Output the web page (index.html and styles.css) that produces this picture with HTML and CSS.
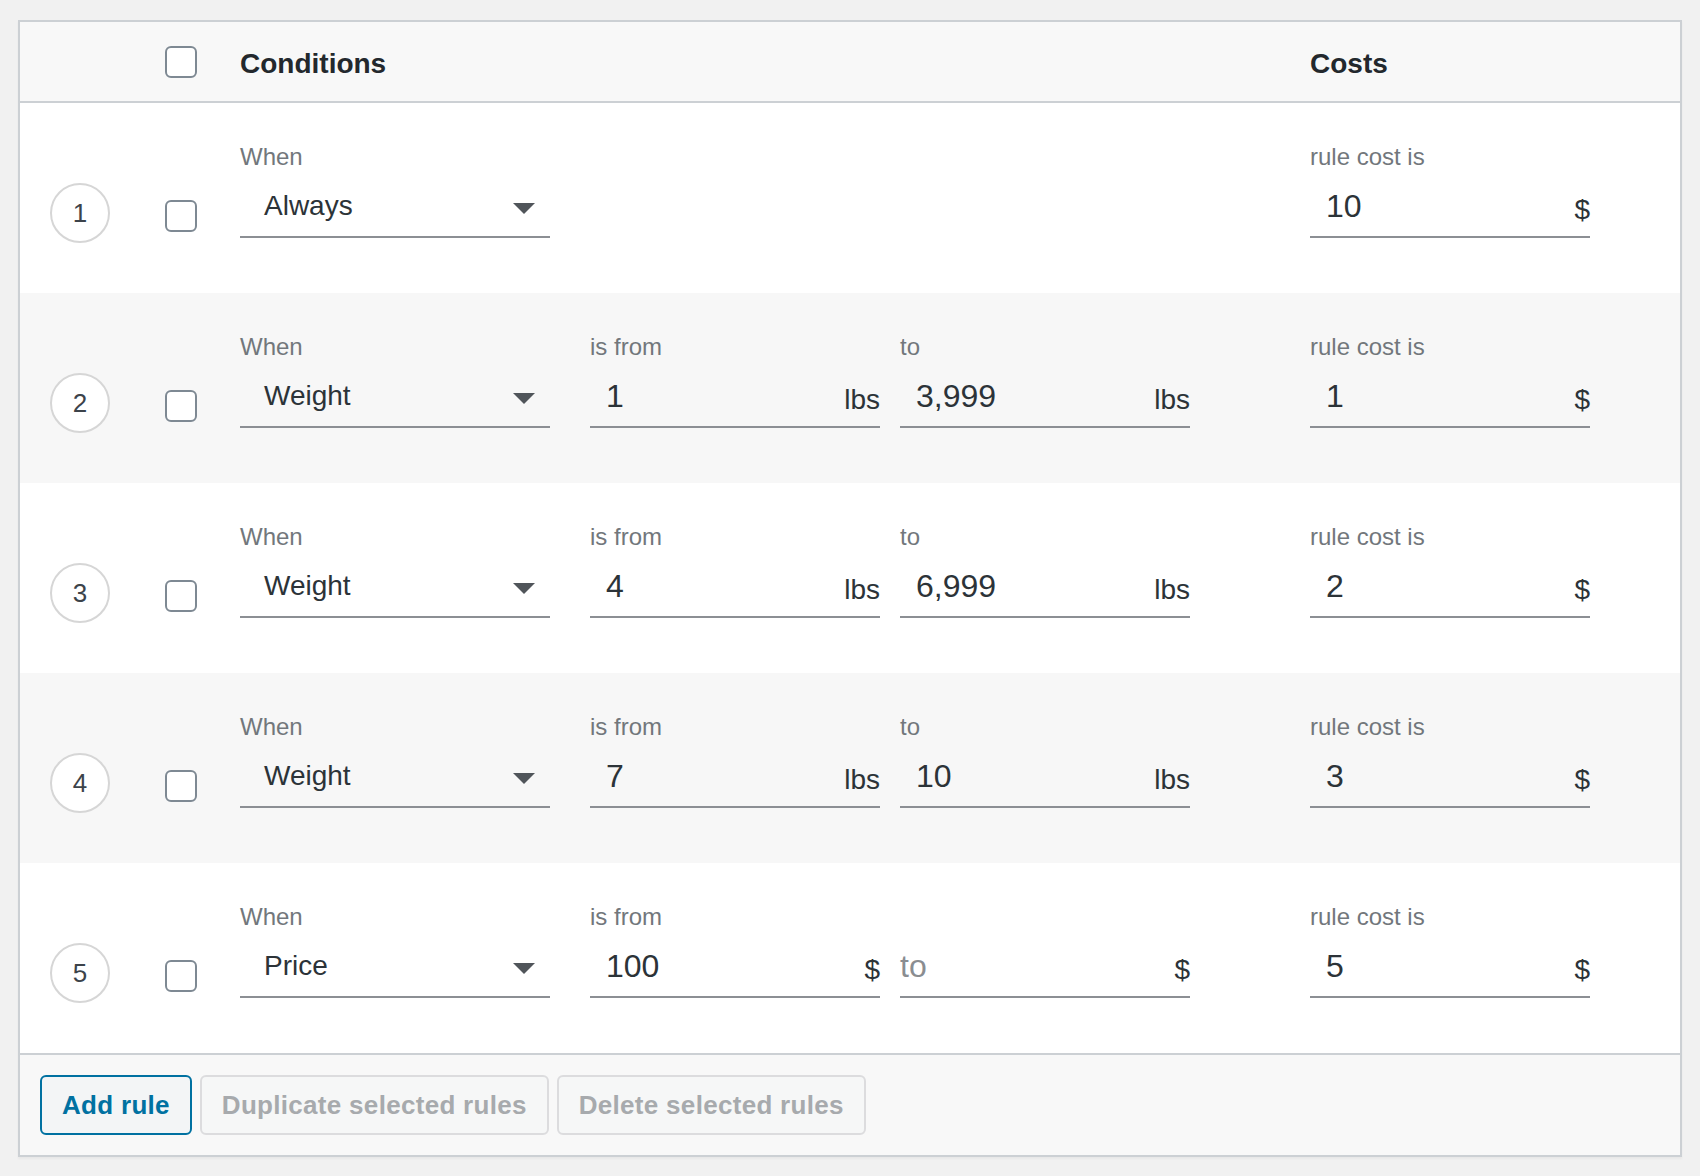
FILE: index.html
```html
<!DOCTYPE html>
<html lang="en">
<head>
<meta charset="utf-8">
<title>Shipping rules</title>
<link rel="stylesheet" href="styles.css">
</head>
<body>
<div class="rules">
  <div class="head">
    <div class="sel-col"><span class="cb"></span></div>
    <div class="h">Conditions</div>
    <div class="h">Costs</div>
  </div>

  <div class="row">
    <div class="sel-col"><span class="num">1</span><span class="cb"></span></div>
    <div class="conds">
      <div class="field f-sel">
        <div class="lbl">When</div>
        <div class="ctl sel"><span class="val">Always</span><svg class="arr" width="22" height="11" viewBox="0 0 22 11"><polygon points="0,0 22,0 11,11" /></svg></div>
      </div>
    </div>
    <div class="costs">
      <div class="field f-cost">
        <div class="lbl">rule cost is</div>
        <div class="ctl"><span class="val n">10</span><span class="suf">$</span></div>
      </div>
    </div>
  </div>

  <div class="row alt">
    <div class="sel-col"><span class="num">2</span><span class="cb"></span></div>
    <div class="conds">
      <div class="field f-sel">
        <div class="lbl">When</div>
        <div class="ctl sel"><span class="val">Weight</span><svg class="arr" width="22" height="11" viewBox="0 0 22 11"><polygon points="0,0 22,0 11,11" /></svg></div>
      </div>
      <div class="field f-num f-from">
        <div class="lbl">is from</div>
        <div class="ctl"><span class="val n">1</span><span class="suf">lbs</span></div>
      </div>
      <div class="field f-num">
        <div class="lbl">to</div>
        <div class="ctl"><span class="val n">3,999</span><span class="suf">lbs</span></div>
      </div>
    </div>
    <div class="costs">
      <div class="field f-cost">
        <div class="lbl">rule cost is</div>
        <div class="ctl"><span class="val n">1</span><span class="suf">$</span></div>
      </div>
    </div>
  </div>

  <div class="row">
    <div class="sel-col"><span class="num">3</span><span class="cb"></span></div>
    <div class="conds">
      <div class="field f-sel">
        <div class="lbl">When</div>
        <div class="ctl sel"><span class="val">Weight</span><svg class="arr" width="22" height="11" viewBox="0 0 22 11"><polygon points="0,0 22,0 11,11" /></svg></div>
      </div>
      <div class="field f-num f-from">
        <div class="lbl">is from</div>
        <div class="ctl"><span class="val n">4</span><span class="suf">lbs</span></div>
      </div>
      <div class="field f-num">
        <div class="lbl">to</div>
        <div class="ctl"><span class="val n">6,999</span><span class="suf">lbs</span></div>
      </div>
    </div>
    <div class="costs">
      <div class="field f-cost">
        <div class="lbl">rule cost is</div>
        <div class="ctl"><span class="val n">2</span><span class="suf">$</span></div>
      </div>
    </div>
  </div>

  <div class="row alt">
    <div class="sel-col"><span class="num">4</span><span class="cb"></span></div>
    <div class="conds">
      <div class="field f-sel">
        <div class="lbl">When</div>
        <div class="ctl sel"><span class="val">Weight</span><svg class="arr" width="22" height="11" viewBox="0 0 22 11"><polygon points="0,0 22,0 11,11" /></svg></div>
      </div>
      <div class="field f-num f-from">
        <div class="lbl">is from</div>
        <div class="ctl"><span class="val n">7</span><span class="suf">lbs</span></div>
      </div>
      <div class="field f-num">
        <div class="lbl">to</div>
        <div class="ctl"><span class="val n">10</span><span class="suf">lbs</span></div>
      </div>
    </div>
    <div class="costs">
      <div class="field f-cost">
        <div class="lbl">rule cost is</div>
        <div class="ctl"><span class="val n">3</span><span class="suf">$</span></div>
      </div>
    </div>
  </div>

  <div class="row">
    <div class="sel-col"><span class="num">5</span><span class="cb"></span></div>
    <div class="conds">
      <div class="field f-sel">
        <div class="lbl">When</div>
        <div class="ctl sel"><span class="val">Price</span><svg class="arr" width="22" height="11" viewBox="0 0 22 11"><polygon points="0,0 22,0 11,11" /></svg></div>
      </div>
      <div class="field f-num f-from">
        <div class="lbl">is from</div>
        <div class="ctl"><span class="val n">100</span><span class="suf">$</span></div>
      </div>
      <div class="field f-num">
        <div class="lbl"></div>
        <div class="ctl"><span class="ph">to</span><span class="suf">$</span></div>
      </div>
    </div>
    <div class="costs">
      <div class="field f-cost">
        <div class="lbl">rule cost is</div>
        <div class="ctl"><span class="val n">5</span><span class="suf">$</span></div>
      </div>
    </div>
  </div>

  <div class="foot">
    <span class="btn primary">Add rule</span>
    <span class="btn disabled">Duplicate selected rules</span>
    <span class="btn disabled">Delete selected rules</span>
  </div>
</div>
</body>
</html>
```

FILE: styles.css
```css
html, body {
  margin: 0;
  background: #f1f1f1;
}
body {
  padding: 20px 0 0 18px;
  height: 1176px;
  box-sizing: border-box;
  font-family: "Liberation Sans", Arial, Helvetica, sans-serif;
  color: #32373c;
}

.rules {
  width: 1664px;
  box-sizing: border-box;
  border: 2px solid #ccd0d4;
  background: #fff;
  box-shadow: 0 2px 2px rgba(0, 0, 0, 0.04);
}

.head {
  display: grid;
  grid-template-columns: 220px 1070px 1fr;
  align-items: center;
  height: 79px;
  background: #f8f8f8;
  border-bottom: 2px solid #ccd0d4;
}
.head .sel-col {
  display: flex;
  padding-left: 145px;
}
.h {
  font-size: 28px;
  font-weight: 700;
  color: #23282d;
  line-height: 32px;
  padding-top: 4px;
}

.cb {
  display: block;
  width: 32px;
  height: 32px;
  box-sizing: border-box;
  border: 2px solid #7e8993;
  border-radius: 6px;
  background: #fff;
  flex: none;
}

.row {
  display: grid;
  grid-template-columns: 220px 1070px 1fr;
  align-items: start;
  height: 190px;
  background: #fff;
}
.row.alt {
  background: #f7f7f7;
}

.row .sel-col {
  display: flex;
  align-items: flex-start;
  padding-left: 30px;
}
.num {
  width: 60px;
  height: 60px;
  box-sizing: border-box;
  margin-top: 80px;
  border: 2px solid #d6d6d6;
  border-radius: 50%;
  display: flex;
  align-items: center;
  justify-content: center;
  font-size: 26px;
  color: #3c434a;
  background: #fff;
  flex: none;
}
.row .cb {
  margin-top: 97px;
  margin-left: 55px;
}

.conds, .costs {
  display: flex;
  padding-top: 38px;
}

.lbl {
  height: 32px;
  font-size: 24px;
  line-height: 32px;
  color: #72777c;
}
.ctl {
  display: flex;
  align-items: center;
  height: 60px;
  margin-top: 3px;
  border-bottom: 2px solid #8c8f94;
}
.val {
  font-size: 28px;
  line-height: 32px;
  padding-left: 16px;
  color: #2c3338;
}
.val.n {
  font-size: 32px;
  line-height: 36px;
}
.ph {
  font-size: 32px;
  line-height: 36px;
  color: #8a8d91;
}
.suf {
  margin-left: auto;
  font-size: 28px;
  line-height: 32px;
  padding-top: 8px;
  color: #2c3338;
}

.f-sel {
  width: 310px;
  margin-right: 40px;
}
.sel .val {
  padding-left: 24px;
}
.arr {
  display: block;
  margin-left: auto;
  margin-right: 15px;
  margin-top: 5px;
  fill: #50555a;
}
.f-num {
  width: 290px;
}
.f-from {
  margin-right: 20px;
}
.f-cost {
  width: 280px;
}

.foot {
  display: flex;
  gap: 8px;
  padding: 20px 20px 20px;
  border-top: 2px solid #ccd0d4;
  background: #f8f8f8;
}
.btn {
  display: flex;
  align-items: center;
  height: 60px;
  box-sizing: border-box;
  padding: 0 20px;
  border: 2px solid #dcdcde;
  border-radius: 6px;
  font-size: 26px;
  font-weight: 700;
  letter-spacing: 0.3px;
}
.btn.primary {
  border-color: #0071a1;
  color: #0071a1;
  background: #f3f5f6;
}
.btn.disabled {
  color: #a7aaad;
  background: #f6f7f7;
  border-color: #dcdcde;
}
```
